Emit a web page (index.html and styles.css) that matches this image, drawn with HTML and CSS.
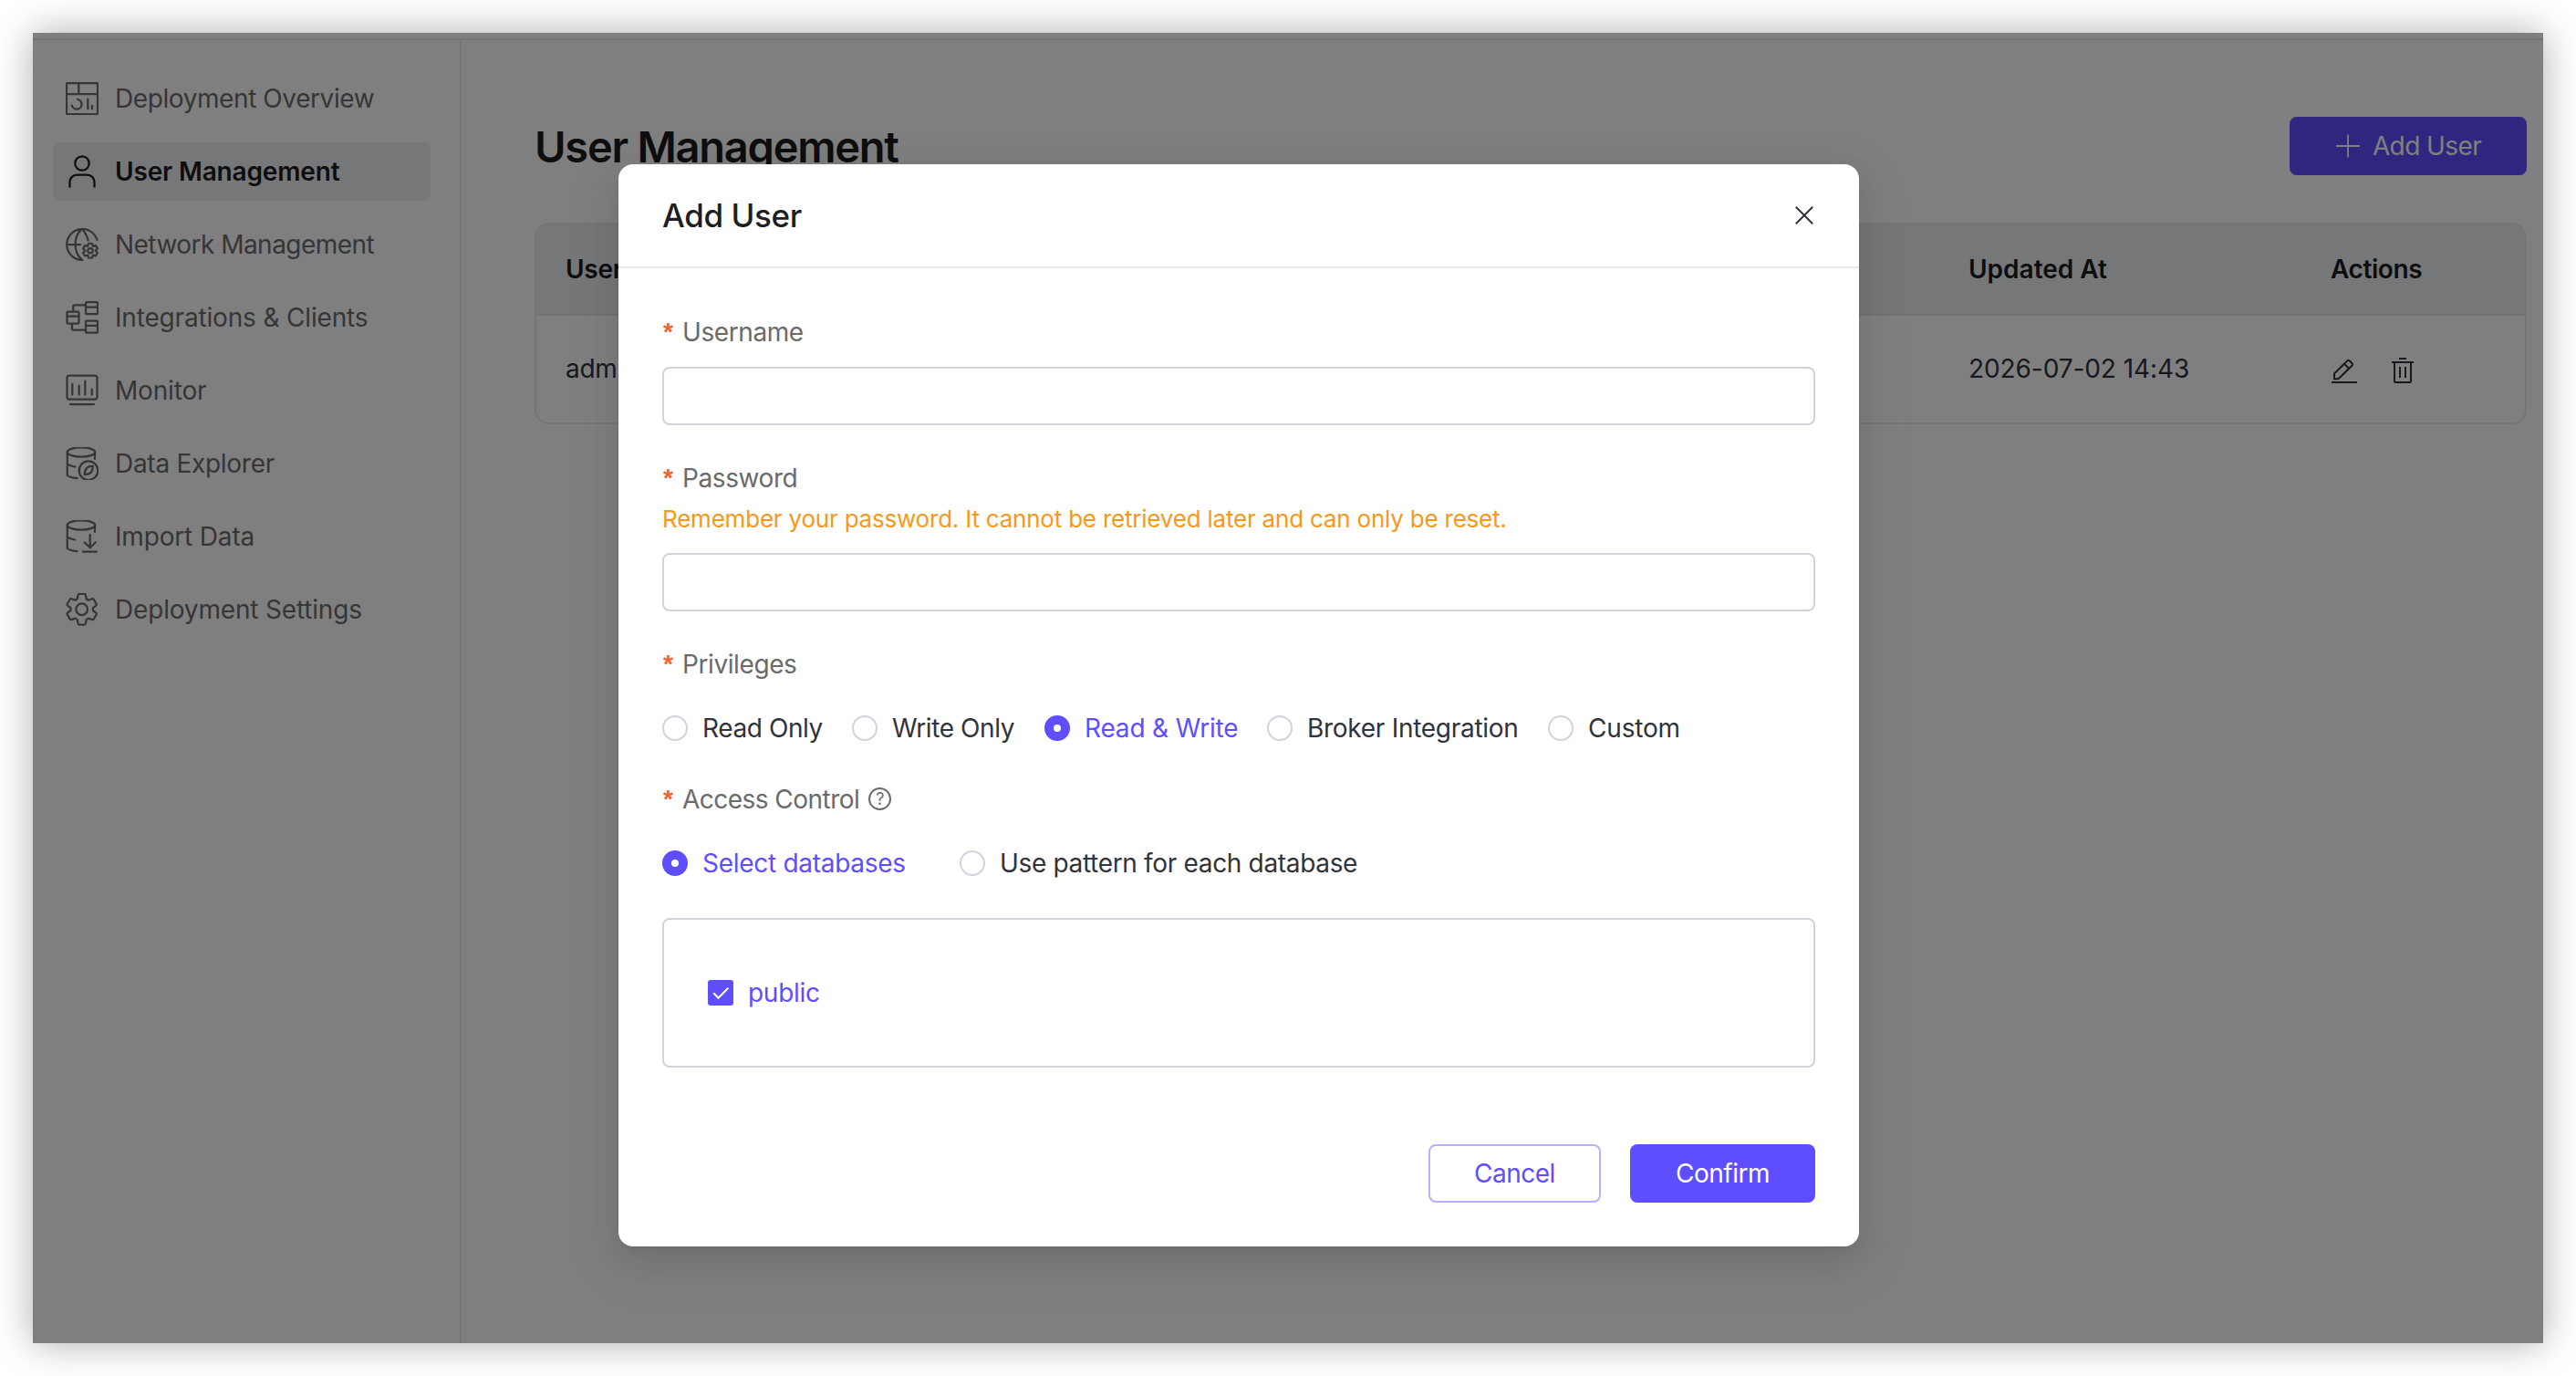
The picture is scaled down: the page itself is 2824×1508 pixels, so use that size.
FILE: index.html
```
<!DOCTYPE html>
<html lang="en">
<head>
<meta charset="utf-8">
<title>User Management</title>
<link rel="stylesheet" href="styles.css">
</head>
<body>
<div class="window">
  <div class="app">
    <nav class="sidebar">
      <a class="nav-item snug">
        <svg class="nav-icon" viewBox="0 0 36 36"><rect x="1" y="1" width="34" height="34" rx="1"/><path d="M1 13H35M14.3 1V13M12.2 18.8A5.4 5.4 0 1 1 6.7 24.6M24.3 17.7V30.3M29 25V30.3"/></svg>
        <span>Deployment Overview</span>
      </a>
      <a class="nav-item active">
        <svg class="nav-icon" viewBox="0 0 36 36"><circle cx="18" cy="9" r="7.7"/><path d="M4.5 35.6V29.5a8 8 0 0 1 8-8h11a8 8 0 0 1 8 8v6.1"/></svg>
        <span>User Management</span>
      </a>
      <a class="nav-item tight">
        <svg class="nav-icon" viewBox="0 0 36 36"><path class="round" d="M34.5 13A17 17 0 1 0 18.3 35C8 27 8 9 18 1c3 3.3 5.6 7.5 6.5 12.3M1 18H16.3"/><path class="round" transform="translate(27 24.7) scale(.96)" d="M-2.1-8.3L2.1-8.3 2.9-5 6.2-6 8.3-2.4 5.8 0 8.3 2.4 6.2 6 2.9 5 2.1 8.3-2.1 8.3-2.9 5-6.2 6-8.3 2.4-5.8 0-8.3-2.4-6.2-6-2.9-5Z"/><circle cx="27" cy="24.7" r="2.7"/></svg>
        <span>Network Management</span>
      </a>
      <a class="nav-item loose">
        <svg class="nav-icon" viewBox="0 0 36 36"><rect x="1.5" y="11.5" width="13" height="13" rx="1"/><rect x="22" y="1.2" width="13" height="13" rx="1"/><rect x="22" y="21.7" width="13" height="13" rx="1"/><path d="M1.5 16.7H14.5M22 6.5H35M22 26.9H35M8.3 11.5V5.3a1 1 0 0 1 1-1H22M7 24.5V30.7a1 1 0 0 0 1 1H22"/></svg>
        <span>Integrations &amp; Clients</span>
      </a>
      <a class="nav-item loose">
        <svg class="nav-icon" viewBox="0 0 36 36"><rect x="1.5" y="1.5" width="33" height="26" rx="2.5"/><path class="round" d="M7.3 11V22.5M14.7 12.5V22.5M21.3 7.5V22.5M28.7 16.5V22.5M5 33H31"/></svg>
        <span>Monitor</span>
      </a>
      <a class="nav-item">
        <svg class="nav-icon" viewBox="0 0 36 36"><ellipse cx="17" cy="5.5" rx="15.2" ry="5.2"/><path class="round" d="M1.8 5.5V31.2c2 1.6 6 2.500 10.700 2.900M32 5.500V12.800M1.800 18.300c1.800 1.700 4.800 2.700 8.500 3.200M29.800 20.900c-6-.6-9 3-9 9.200c6 0 9-3 9-9.200z"/><circle cx="25" cy="25.700" r="10.300"/></svg>
        <span>Data Explorer</span>
      </a>
      <a class="nav-item loose">
        <svg class="nav-icon" viewBox="0 0 36 36"><ellipse cx="17" cy="5.5" rx="15.2" ry="5.2"/><path class="round" d="M1.8 5.5V31.2c2 1.6 6 2.5 10.7 2.9M32 5.5V12.8M1.8 18.3c1.8 1.7 4.8 2.7 8.5 3.2M26.7 16V30M20.7 24.5L26.7 30.3 32.7 24.5M19 34.6H34"/></svg>
        <span>Import Data</span>
      </a>
      <a class="nav-item loose">
        <svg class="nav-icon" viewBox="0 0 36 36"><path class="round" transform="translate(17.7 17.7)" d="M-4.2-15.5Q-3.9-16.8-2.7-16.8H2.7Q3.9-16.8 4.2-15.5L5-11.2 7.2-9.9 11.3-11.4Q12.5-11.7 13.1-10.7L15.9-5.9Q16.5-4.8 15.6-4L12.2-1.3V1.3L15.6 4Q16.5 4.8 15.9 5.9L13.1 10.7Q12.5 11.7 11.3 11.4L7.2 9.9 5 11.2 4.2 15.5Q3.9 16.8 2.7 16.8H-2.7Q-3.9 16.8-4.2 15.5L-5 11.2-7.2 9.9-11.3 11.4Q-12.5 11.7-13.1 10.7L-15.9 5.9Q-16.5 4.8-15.6 4L-12.2 1.3V-1.3L-15.6-4Q-16.5-4.8-15.9-5.9L-13.1-10.7Q-12.5-11.7-11.3-11.4L-7.2-9.9-5-11.2Z"/><circle cx="17.7" cy="17.7" r="6.3"/></svg>
        <span>Deployment Settings</span>
      </a>
    </nav>
    <main class="main">
      <header class="page-head">
        <h1>User Management</h1>
        <button class="btn btn-primary btn-add">
          <svg viewBox="0 0 28 28"><path d="M1 14H27M14 1.5V26.5"/></svg>
          <span>Add User</span>
        </button>
      </header>
      <div class="table">
        <div class="row row-head"><span>Username</span><span class="wide">Updated At</span><span class="snug">Actions</span></div>
        <div class="row">
          <span>admin</span>
          <span class="date">2026-07-02 14:43</span>
          <span class="actions">
            <svg width="28" height="28" viewBox="0 0 28 28"><path d="M0 27H28M3 23.3V17.5L17.4 3.3Q18.5 2.3 19.6 3.3L22.6 6.3Q23.6 7.4 22.6 8.5L8.3 22.5Q7.5 23.3 6.5 23.3ZM14 6.7L19 11.7"/></svg>
            <svg width="24" height="28" viewBox="0 0 24 28"><path d="M8 1H16M0 5H24M3 5V26a1 1 0 0 0 1 1H20a1 1 0 0 0 1-1V5M9 10V22M15 10V22"/></svg>
          </span>
        </div>
      </div>
    </main>
  </div>

  <div class="mask">
    <section class="modal">
      <header class="modal-head">
        <h2>Add User</h2>
        <svg class="close" viewBox="0 0 20 20"><path d="M.8.8L19.2 19.2M19.2.8L.8 19.2"/></svg>
      </header>
      <form class="modal-body">
        <label class="label snug">Username</label>
        <div class="input"></div>
        <label class="label label-next snug">Password</label>
        <p class="hint">Remember your password. It cannot be retrieved later and can only be reset.</p>
        <div class="input"></div>
        <label class="label label-next snug">Privileges</label>
        <div class="radios privileges">
          <span class="radio snug"><i class="dot"></i>Read Only</span>
          <span class="radio snug"><i class="dot"></i>Write Only</span>
          <span class="radio loose on"><i class="dot"></i>Read &amp; Write</span>
          <span class="radio"><i class="dot"></i>Broker Integration</span>
          <span class="radio loose"><i class="dot"></i>Custom</span>
        </div>
        <label class="label label-access tight">Access Control<span class="help">?</span></label>
        <div class="radios scope">
          <span class="radio on"><i class="dot"></i>Select databases</span>
          <span class="radio pattern"><i class="dot"></i>Use pattern for each database</span>
        </div>
        <div class="databases">
          <span class="check"><svg viewBox="0 0 28 28"><rect width="28" height="28" rx="3"/><path d="M6.3 14.3L11.5 19.8 22.3 8.8"/></svg>public</span>
        </div>
        <footer class="modal-foot">
          <button type="button" class="btn btn-cancel">Cancel</button>
          <button type="button" class="btn btn-primary btn-confirm">Confirm</button>
        </footer>
      </form>
    </section>
  </div>
</div>
</body>
</html>
```
FILE: styles.css
```
* { box-sizing: border-box; }

body {
  margin: 0;
  padding: 36px;
  height: 1508px;
  background: #fff;
  font: 400 28px/44px Inter, sans-serif;
  letter-spacing: -0.28px;
  color: #30323c;
}

h1, h2, p { margin: 0; }
svg { display: block; flex: none; fill: none; stroke: currentColor; stroke-width: 2; }
.round { stroke-linecap: round; stroke-linejoin: round; }

/* tracking steps */
.tight { letter-spacing: -0.53px; }
.snug { letter-spacing: -0.41px; }
.loose { letter-spacing: -0.17px; }
.wide { letter-spacing: 0; }

.window {
  position: relative;
  width: 2752px;
  height: 1436px;
  box-shadow: 0 0 40px rgba(0, 0, 0, .33);
}

.app {
  display: flex;
  height: 100%;
  background: #fff;
  padding-top: 6px;
}

.sidebar {
  width: 470px;
  padding: 32px 32px 0 22px;
  border-top: 2px solid #ebebeb;
  border-right: 2px solid #ebebeb;
  color: #6c6c6c;
}
.nav-item {
  display: flex;
  align-items: center;
  gap: 18px;
  height: 64px;
  margin-bottom: 16px;
  padding-left: 14px;
  border-radius: 8px;
}
.nav-icon { width: 36px; height: 36px; stroke-width: 2.25; }
.active {
  background: #eceef2;
  color: #1c1c1c;
  font-weight: 600;
  letter-spacing: -0.15px;
}

.main {
  flex: 1;
  border-top: 2px solid #ebebeb;
  padding: 84px 18px 0 80px;
}
.page-head {
  display: flex;
  justify-content: space-between;
  align-items: center;
  height: 64px;
}
h1 {
  padding-top: 2px;
  font-size: 47px;
  font-weight: 600;
  line-height: 64px;
  letter-spacing: -1.25px;
  color: #1c1c1c;
}

.btn {
  display: flex;
  align-items: center;
  justify-content: center;
  height: 64px;
  padding: 0;
  border: 2px solid transparent;
  border-radius: 8px;
  font: inherit;
  letter-spacing: -0.5px;
}
.btn-primary { background: #5e4eff; color: #fff; }
.btn-add { width: 260px; gap: 13px; letter-spacing: -0.6px; }
.btn-add svg { width: 28px; height: 28px; stroke-width: 1.8; }

.table {
  margin-top: 52px;
  border: 2px solid #ebebeb;
  border-radius: 16px;
  overflow: hidden;
}
.row {
  display: grid;
  grid-template-columns: 1538px 397px 1fr;
  align-items: center;
  height: 117px;
  padding: 0 0 2px 32px;
}
.row-head {
  height: 100px;
  padding-bottom: 0;
  background: #eceef2;
  border-bottom: 2px solid #e6e7ea;
  font-weight: 600;
  color: #1c1c1c;
}
.date { letter-spacing: -0.08px; }
.actions { display: flex; gap: 38px; padding: 5px 0 0 1px; }

.mask {
  position: absolute;
  inset: 0;
  padding: 144px 0 0 642px;
  background: rgba(0, 0, 0, .5);
}
.modal {
  width: 1360px;
  height: 1186px;
  background: #fff;
  border-radius: 16px;
  box-shadow: 0 12px 32px rgba(0, 0, 0, .08), 0 6px 12px -8px rgba(0, 0, 0, .12), 0 18px 56px 16px rgba(0, 0, 0, .05);
}
.modal-head {
  display: flex;
  align-items: center;
  justify-content: space-between;
  height: 114px;
  padding: 0 50px 0 48px;
  border-bottom: 2px solid #e8e8e8;
}
h2 {
  font-size: 35px;
  font-weight: 500;
  letter-spacing: -0.4px;
  color: #1f1f1f;
}
.close { width: 20px; height: 20px; }

.modal-body { padding: 48px 48px 0; }
.label {
  display: flex;
  height: 44px;
  color: #6a6a6a;
}
.label::before {
  content: "*";
  width: 20px;
  padding-left: 1px;
  font-family: "Liberation Sans", sans-serif;
  font-weight: 700;
  color: #f5632c;
}
.label::before { width: 21px; }
.label-next { margin-top: 36px; }
.label-access { margin-top: 34px; }
.input {
  height: 64px;
  margin-top: 16px;
  border: 2px solid #cfd3de;
  border-radius: 8px;
}
.hint {
  height: 44px;
  line-height: 46px;
  font-size: 26px;
  letter-spacing: -0.21px;
  color: #f7981a;
}

.radios { display: grid; margin-top: 26px; }
.privileges { grid-template-columns: 208px 211px 244px 308px 1fr; }
.scope { grid-template-columns: 326px 1fr; }
.radio { display: flex; align-items: center; gap: 16px; }
.pattern { letter-spacing: -0.33px; }
.on { color: #5e4eff; }
.dot { width: 28px; height: 28px; border: 2px solid #d0d4de; border-radius: 50%; }
.on .dot { border: 10px solid #5e4eff; }
.help {
  width: 25px;
  height: 25px;
  margin: 9px 0 0 10px;
  border: 2px solid #6a6a6a;
  border-radius: 50%;
  font-size: 18px;
  line-height: 21px;
  letter-spacing: 0;
  text-align: center;
}

.databases {
  display: flex;
  align-items: center;
  height: 164px;
  margin-top: 38px;
  padding-left: 48px;
  border: 2px solid #cfd3de;
  border-radius: 8px;
}
.check { display: flex; align-items: center; gap: 16px; color: #5e4eff; }
.check svg { width: 28px; height: 28px; }
.check rect { fill: #5e4eff; stroke: none; }
.check path { stroke: #fff; }

.modal-foot {
  display: flex;
  justify-content: flex-end;
  gap: 32px;
  margin-top: 84px;
}
.btn-cancel { width: 189px; background: #fff; border-color: #b7b0ff; color: #5e4eff; }
.btn-confirm { width: 203px; }
```
